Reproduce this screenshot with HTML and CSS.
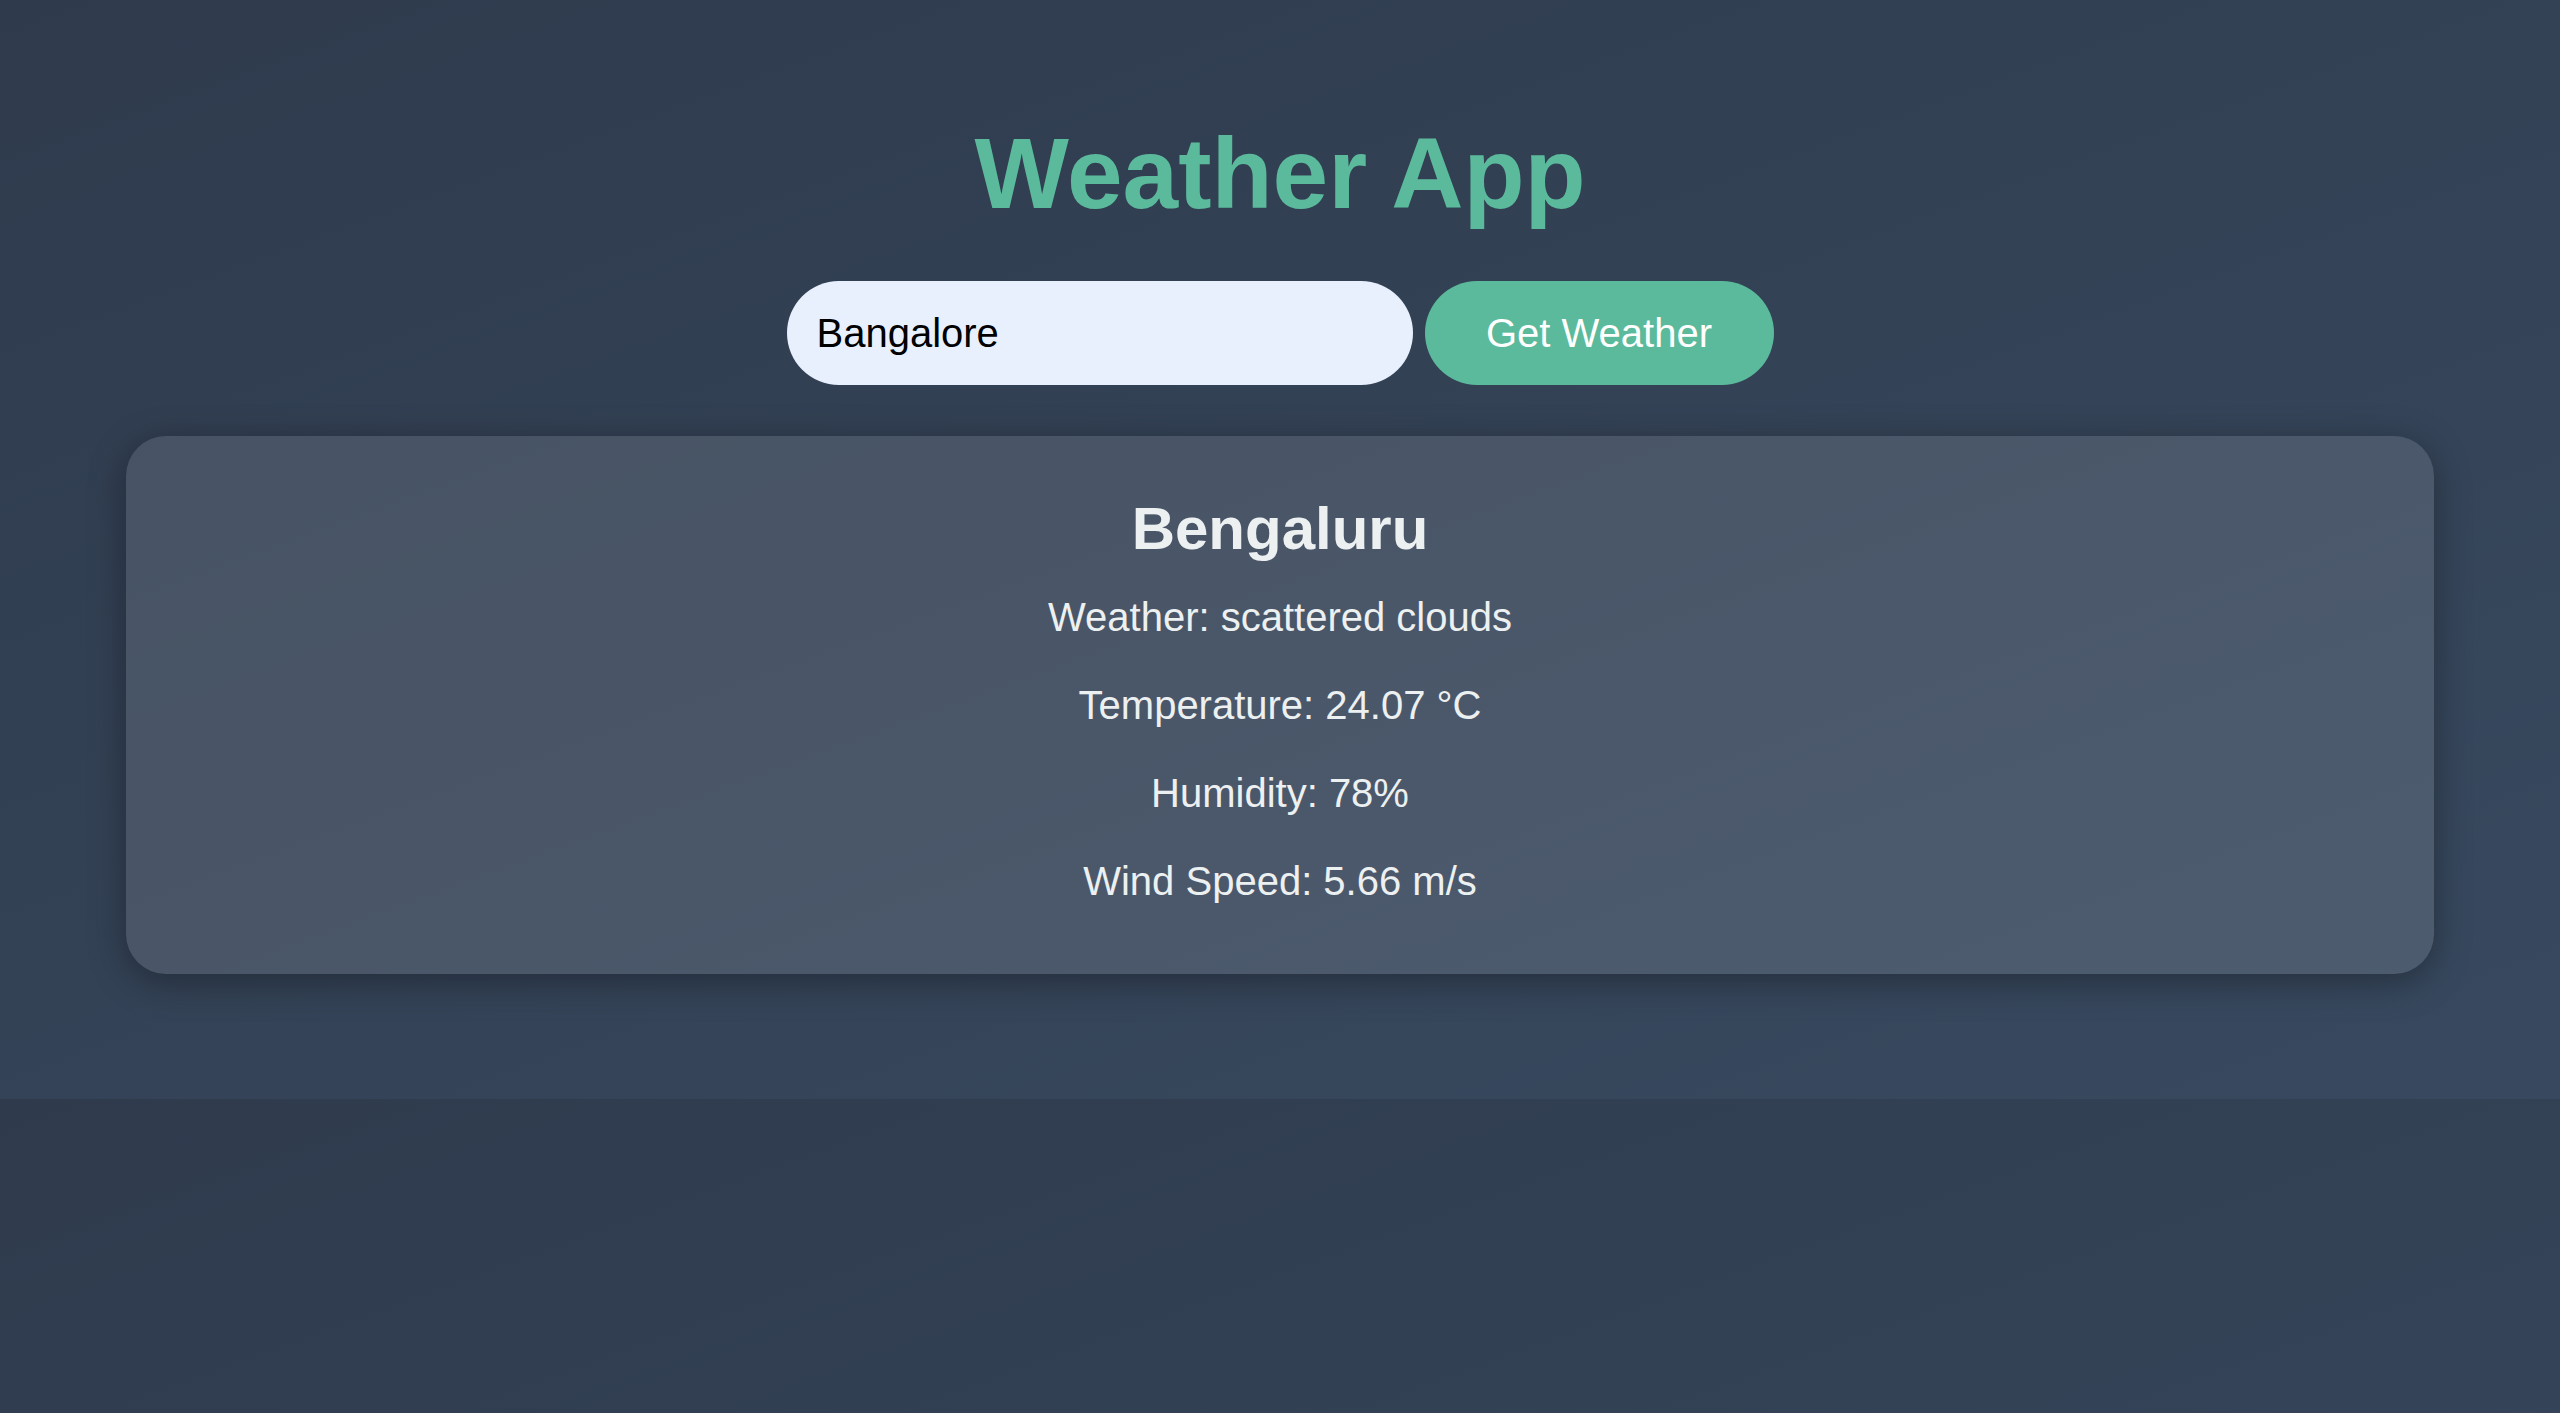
FILE: index.html
```html
<!DOCTYPE html>
<html lang="en">
<head>
<meta charset="UTF-8">
<title>Weather App</title>
<link rel="stylesheet" href="styles.css">
</head>
<body>
  <main class="app">
    <h1 class="title">Weather App</h1>
    <form class="search">
      <input class="search-input" type="text" value="Bangalore">
      <button class="search-button" type="button">Get Weather</button>
    </form>
    <section class="card">
      <h2 class="city">Bengaluru</h2>
      <div class="details">
        <p class="detail">Weather: scattered clouds</p>
        <p class="detail">Temperature: 24.07 °C</p>
        <p class="detail">Humidity: 78%</p>
        <p class="detail">Wind Speed: 5.66 m/s</p>
      </div>
    </section>
  </main>
</body>
</html>
```
FILE: styles.css
```css
body {
  margin: 0;
  font-family: "Liberation Sans", Arial, Helvetica, sans-serif;
  background: linear-gradient(160deg, #2f3b4d, #38495f);
  color: #ecf0f1;
}

.app {
  padding: 116px 126px 125px;
  display: flex;
  flex-direction: column;
  align-items: center;
}

.title {
  margin: 0 0 50px;
  font-size: 100px;
  line-height: 115px;
  font-weight: 700;
  color: #5bba9c;
}

.search {
  display: flex;
  gap: 12px;
  margin: 0 0 51px;
}

.search-input {
  box-sizing: border-box;
  width: 626px;
  height: 104px;
  padding: 0 30px;
  border: none;
  border-radius: 52px;
  background: #e8f0fe;
  color: #000;
  font-family: "Liberation Sans", Arial, Helvetica, sans-serif;
  font-size: 40px;
  outline: none;
}

.search-button {
  box-sizing: border-box;
  width: 349px;
  height: 104px;
  padding: 0;
  border: none;
  border-radius: 52px;
  background: #5bba9c;
  color: #fff;
  font-family: "Liberation Sans", Arial, Helvetica, sans-serif;
  font-size: 40px;
  cursor: pointer;
}

.card {
  box-sizing: border-box;
  align-self: stretch;
  padding: 58px 30px 70px;
  border-radius: 40px;
  background: rgba(255, 255, 255, 0.11);
  box-shadow: 0 8px 36px rgba(0, 0, 0, 0.34);
  text-align: center;
}

.city {
  margin: 0 0 31px;
  font-size: 60px;
  line-height: 69px;
  font-weight: 700;
}

.details {
  display: flex;
  flex-direction: column;
  gap: 42px;
}

.detail {
  margin: 0;
  font-size: 40px;
  line-height: 46px;
}
```
